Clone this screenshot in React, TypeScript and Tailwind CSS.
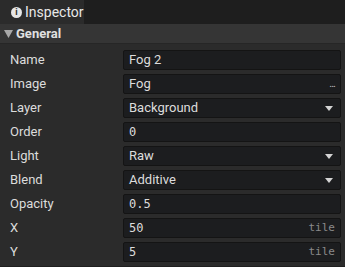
import React from 'react';

type Row = { label: string; value: string; kind?: 'text' | 'select' | 'browse' | 'num'; unit?: string };

const rows: Row[] = [
    { label: 'Name', value: 'Fog 2' },
    { label: 'Image', value: 'Fog', kind: 'browse' },
    { label: 'Layer', value: 'Background', kind: 'select' },
    { label: 'Order', value: '0', kind: 'num' },
    { label: 'Light', value: 'Raw', kind: 'select' },
    { label: 'Blend', value: 'Additive', kind: 'select' },
    { label: 'Opacity', value: '0.5', kind: 'num' },
    { label: 'X', value: '50', kind: 'num', unit: 'tile' },
    { label: 'Y', value: '5', kind: 'num', unit: 'tile' },
];

function Caret() {
    return (
        <svg width="8" height="5" viewBox="0 0 8 5" className="shrink-0 mr-[2px]">
            <path d="M0 0H8L4 5Z" fill="#d4d4d4" />
        </svg>
    );
}

export default function App() {
    return (
        <div
            className="w-[345px] h-[267px] bg-[#2b2b2b] text-[#dcdcdc] text-[13px] overflow-hidden flex flex-col"
            style={{ fontFamily: 'Roboto, "Noto Sans", sans-serif' }}
        >
            <div className="h-6 bg-[#1e1e1e] flex shrink-0">
                <div className="w-[84px] bg-[#2b2b2b] flex items-center gap-[3px] pl-[11px]">
                    <span className="w-[11px] h-[11px] rounded-full bg-[#e6e6e6] text-[#2b2b2b] text-[9px] font-bold leading-none flex items-center justify-center">
                        i
                    </span>
                    <span className="text-[#e8e8e8] text-[14px]">Inspector</span>
                </div>
            </div>
            <div className="h-5 bg-[#353535] flex items-center pl-1 gap-[3px] border-b border-[#262626] shrink-0">
                <svg width="9" height="8" viewBox="0 0 9 8">
                    <path d="M0 0H9L4.5 8Z" fill="#a8a8a8" />
                </svg>
                <span className="font-bold text-[#e0e0e0]">General</span>
            </div>
            <div className="flex flex-col pt-[6px] gap-1 flex-1 border-b border-[#1f1f1f]">
                {rows.map((r) => (
                    <div key={r.label} className="flex items-center h-5">
                        <span className="w-[123px] pl-[10px] shrink-0">{r.label}</span>
                        <div className="w-[218px] h-5 bg-[#1c1d1f] border border-[#141414] rounded-[2px] flex items-center pl-[5px] pr-[5px]">
                            <span
                                className="flex-1"
                                style={r.kind === 'num' ? { fontFamily: '"DejaVu Sans Mono", monospace', fontSize: '12px' } : undefined}
                            >
                                {r.value}
                            </span>
                            {r.kind === 'select' && <Caret />}
                            {r.kind === 'browse' && (
                                <span className="text-[#bdbdbd] text-[11px] leading-none tracking-[-1px] pb-[2px]">...</span>
                            )}
                            {r.unit && (
                                <span
                                    className="text-[#8a8a8a] text-[11px]"
                                    style={{ fontFamily: '"DejaVu Sans Mono", monospace' }}
                                >
                                    {r.unit}
                                </span>
                            )}
                        </div>
                    </div>
                ))}
            </div>
        </div>
    );
}
